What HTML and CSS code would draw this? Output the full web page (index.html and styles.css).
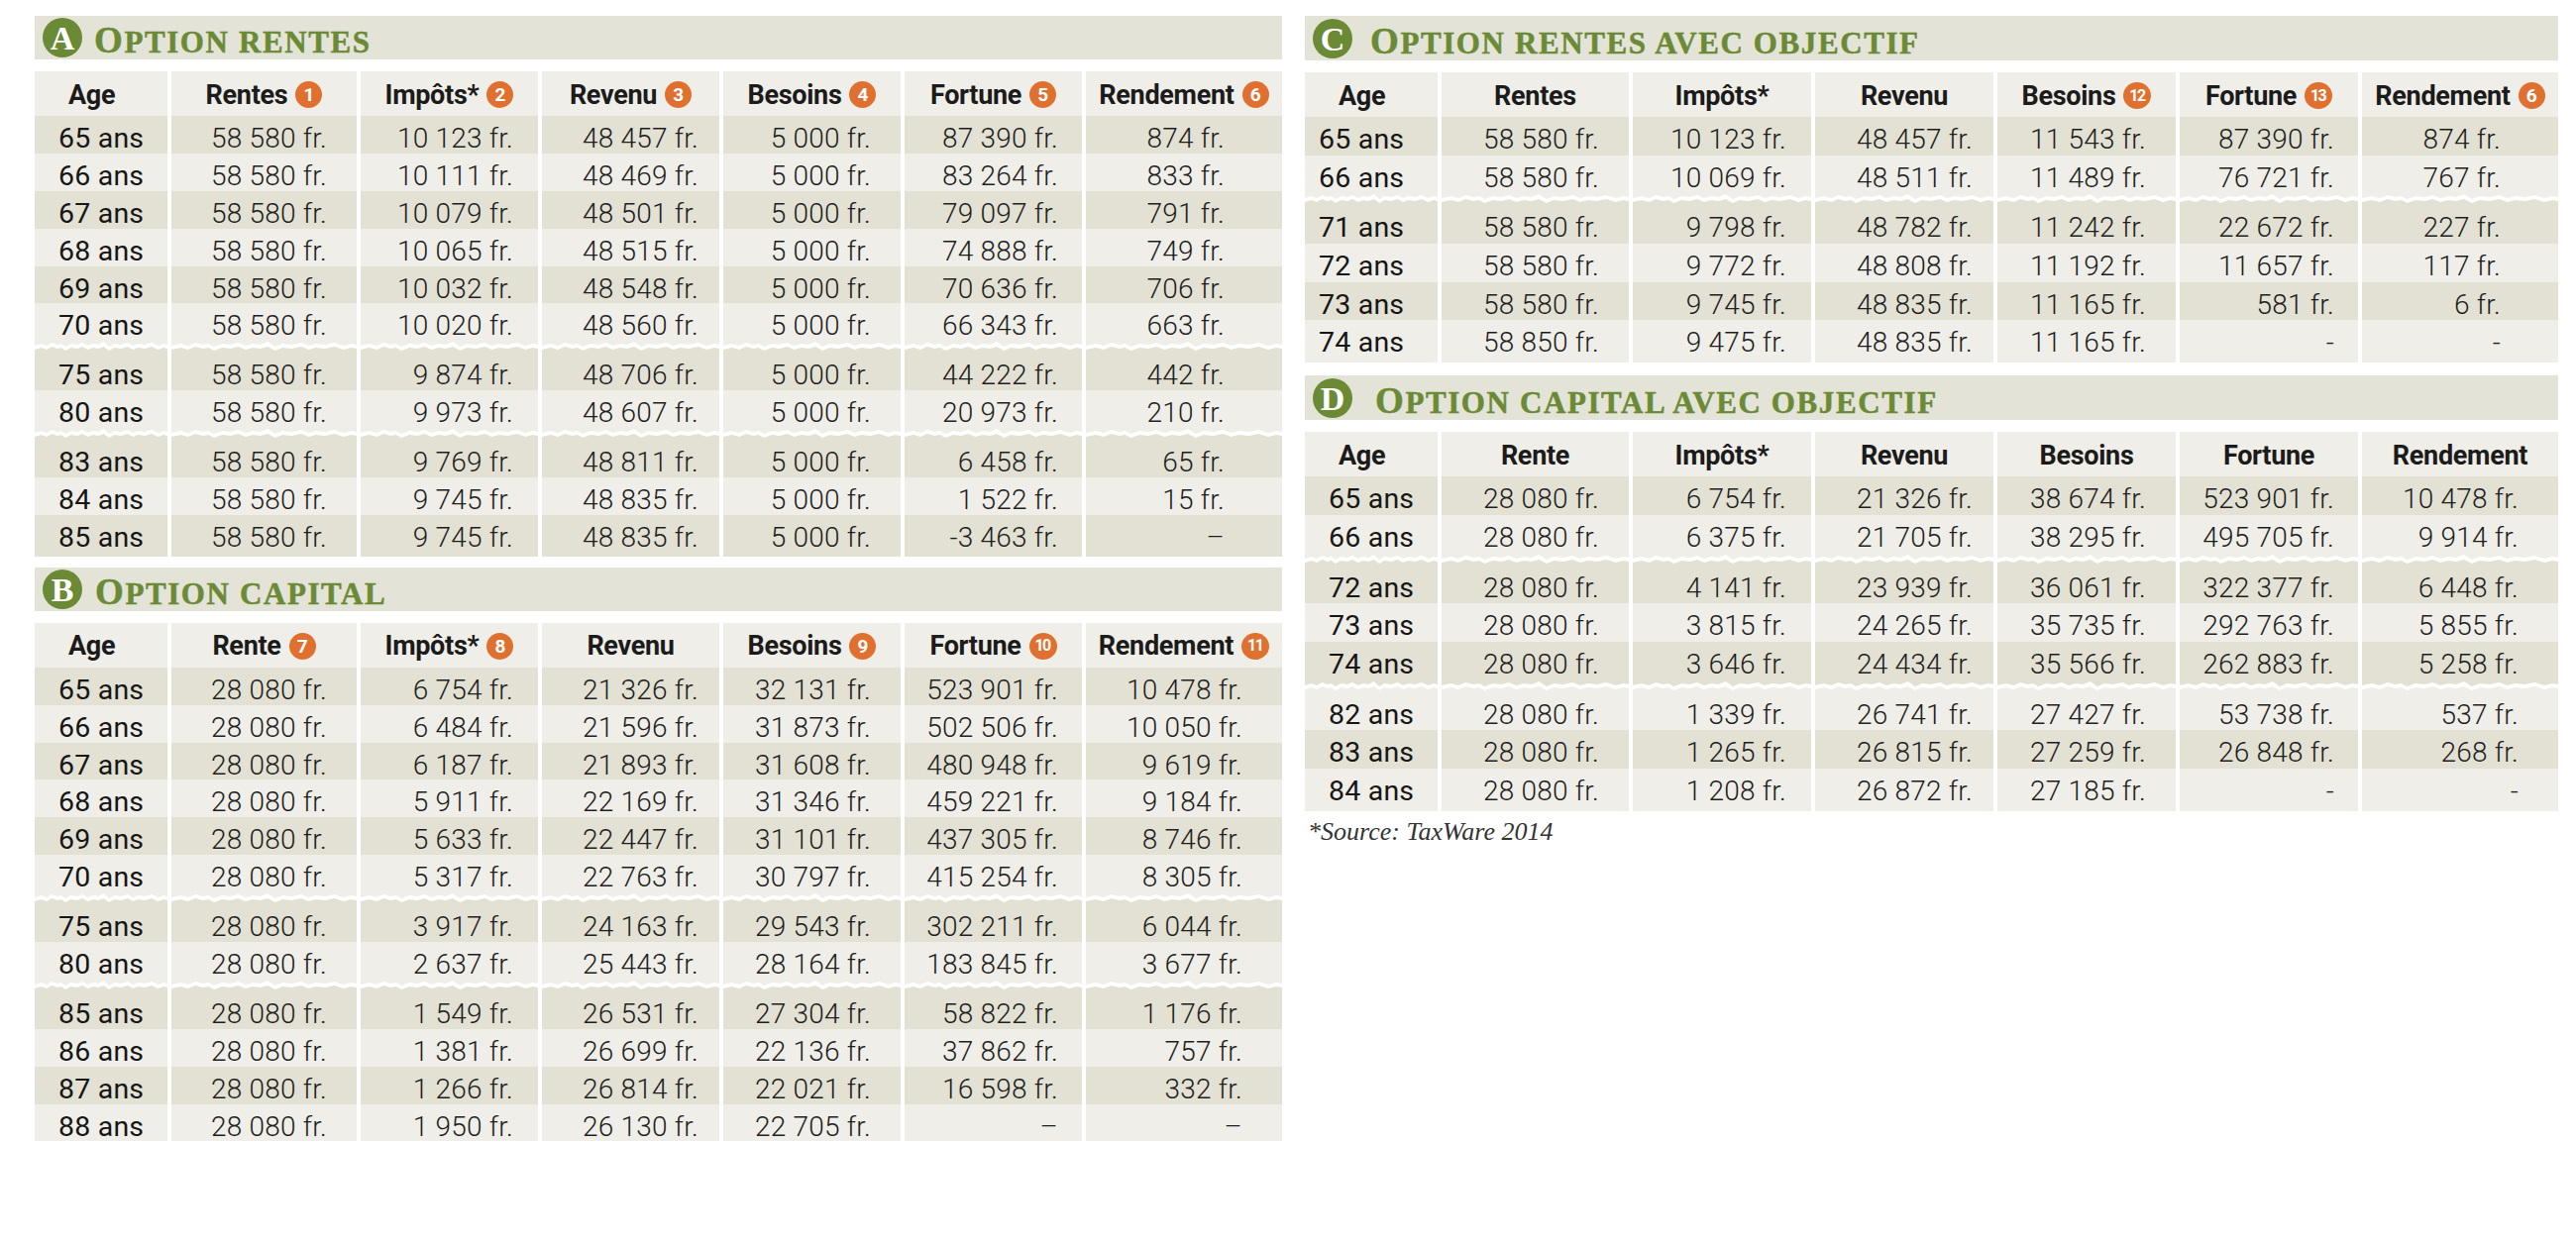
FILE: index.html
```html
<!DOCTYPE html>
<html lang="fr">
<head>
<meta charset="utf-8">
<title>Options rentes et capital</title>
<link rel="stylesheet" href="styles.css">
</head>
<body>
<div class="sheet">
  <div class="col col-l">
    <section class="sec sec-a">
      <div class="ttl"><span class="letter">A</span><h2><span class="big">O</span>ption rentes</h2></div>
      <div class="tbl pad-a">
        <div class="row hd"><div class="age">Age</div><div>Rentes<i class="n">1</i></div><div>Impôts*<i class="n">2</i></div><div>Revenu<i class="n">3</i></div><div>Besoins<i class="n">4</i></div><div>Fortune<i class="n">5</i></div><div>Rendement<i class="n">6</i></div></div>
        <div class="row d"><div class="age">65 ans</div><div>58 580 fr.</div><div>10 123 fr.</div><div>48 457 fr.</div><div>5 000 fr.</div><div>87 390 fr.</div><div>874 fr.</div></div>
        <div class="row l"><div class="age">66 ans</div><div>58 580 fr.</div><div>10 111 fr.</div><div>48 469 fr.</div><div>5 000 fr.</div><div>83 264 fr.</div><div>833 fr.</div></div>
        <div class="row d"><div class="age">67 ans</div><div>58 580 fr.</div><div>10 079 fr.</div><div>48 501 fr.</div><div>5 000 fr.</div><div>79 097 fr.</div><div>791 fr.</div></div>
        <div class="row l"><div class="age">68 ans</div><div>58 580 fr.</div><div>10 065 fr.</div><div>48 515 fr.</div><div>5 000 fr.</div><div>74 888 fr.</div><div>749 fr.</div></div>
        <div class="row d"><div class="age">69 ans</div><div>58 580 fr.</div><div>10 032 fr.</div><div>48 548 fr.</div><div>5 000 fr.</div><div>70 636 fr.</div><div>706 fr.</div></div>
        <div class="row l"><div class="age">70 ans</div><div>58 580 fr.</div><div>10 020 fr.</div><div>48 560 fr.</div><div>5 000 fr.</div><div>66 343 fr.</div><div>663 fr.</div></div>
        <div class="row brk ld"><div></div><div></div><div></div><div></div><div></div><div></div><div></div></div>
        <div class="row d"><div class="age">75 ans</div><div>58 580 fr.</div><div>9 874 fr.</div><div>48 706 fr.</div><div>5 000 fr.</div><div>44 222 fr.</div><div>442 fr.</div></div>
        <div class="row l"><div class="age">80 ans</div><div>58 580 fr.</div><div>9 973 fr.</div><div>48 607 fr.</div><div>5 000 fr.</div><div>20 973 fr.</div><div>210 fr.</div></div>
        <div class="row brk ld"><div></div><div></div><div></div><div></div><div></div><div></div><div></div></div>
        <div class="row d"><div class="age">83 ans</div><div>58 580 fr.</div><div>9 769 fr.</div><div>48 811 fr.</div><div>5 000 fr.</div><div>6 458 fr.</div><div>65 fr.</div></div>
        <div class="row l"><div class="age">84 ans</div><div>58 580 fr.</div><div>9 745 fr.</div><div>48 835 fr.</div><div>5 000 fr.</div><div>1 522 fr.</div><div>15 fr.</div></div>
        <div class="row d"><div class="age">85 ans</div><div>58 580 fr.</div><div>9 745 fr.</div><div>48 835 fr.</div><div>5 000 fr.</div><div>-3 463 fr.</div><div>–</div></div>
      </div>
    </section>

    <section class="sec sec-b">
      <div class="ttl"><span class="letter">B</span><h2><span class="big">O</span>ption capital</h2></div>
      <div class="tbl pad-b">
        <div class="row hd"><div class="age">Age</div><div>Rente<i class="n">7</i></div><div>Impôts*<i class="n">8</i></div><div>Revenu</div><div>Besoins<i class="n">9</i></div><div>Fortune<i class="n nn">10</i></div><div>Rendement<i class="n nn">11</i></div></div>
        <div class="row d"><div class="age">65 ans</div><div>28 080 fr.</div><div>6 754 fr.</div><div>21 326 fr.</div><div>32 131 fr.</div><div>523 901 fr.</div><div>10 478 fr.</div></div>
        <div class="row l"><div class="age">66 ans</div><div>28 080 fr.</div><div>6 484 fr.</div><div>21 596 fr.</div><div>31 873 fr.</div><div>502 506 fr.</div><div>10 050 fr.</div></div>
        <div class="row d"><div class="age">67 ans</div><div>28 080 fr.</div><div>6 187 fr.</div><div>21 893 fr.</div><div>31 608 fr.</div><div>480 948 fr.</div><div>9 619 fr.</div></div>
        <div class="row l"><div class="age">68 ans</div><div>28 080 fr.</div><div>5 911 fr.</div><div>22 169 fr.</div><div>31 346 fr.</div><div>459 221 fr.</div><div>9 184 fr.</div></div>
        <div class="row d"><div class="age">69 ans</div><div>28 080 fr.</div><div>5 633 fr.</div><div>22 447 fr.</div><div>31 101 fr.</div><div>437 305 fr.</div><div>8 746 fr.</div></div>
        <div class="row l"><div class="age">70 ans</div><div>28 080 fr.</div><div>5 317 fr.</div><div>22 763 fr.</div><div>30 797 fr.</div><div>415 254 fr.</div><div>8 305 fr.</div></div>
        <div class="row brk ld"><div></div><div></div><div></div><div></div><div></div><div></div><div></div></div>
        <div class="row d"><div class="age">75 ans</div><div>28 080 fr.</div><div>3 917 fr.</div><div>24 163 fr.</div><div>29 543 fr.</div><div>302 211 fr.</div><div>6 044 fr.</div></div>
        <div class="row l"><div class="age">80 ans</div><div>28 080 fr.</div><div>2 637 fr.</div><div>25 443 fr.</div><div>28 164 fr.</div><div>183 845 fr.</div><div>3 677 fr.</div></div>
        <div class="row brk ld"><div></div><div></div><div></div><div></div><div></div><div></div><div></div></div>
        <div class="row d"><div class="age">85 ans</div><div>28 080 fr.</div><div>1 549 fr.</div><div>26 531 fr.</div><div>27 304 fr.</div><div>58 822 fr.</div><div>1 176 fr.</div></div>
        <div class="row l"><div class="age">86 ans</div><div>28 080 fr.</div><div>1 381 fr.</div><div>26 699 fr.</div><div>22 136 fr.</div><div>37 862 fr.</div><div>757 fr.</div></div>
        <div class="row d"><div class="age">87 ans</div><div>28 080 fr.</div><div>1 266 fr.</div><div>26 814 fr.</div><div>22 021 fr.</div><div>16 598 fr.</div><div>332 fr.</div></div>
        <div class="row l"><div class="age">88 ans</div><div>28 080 fr.</div><div>1 950 fr.</div><div>26 130 fr.</div><div>22 705 fr.</div><div>–</div><div>–</div></div>
      </div>
    </section>
  </div>

  <div class="col col-r">
    <section class="sec sec-c">
      <div class="ttl"><span class="letter">C</span><h2><span class="big">O</span>ption rentes avec objectif</h2></div>
      <div class="tbl pad-c">
        <div class="row hd"><div class="age">Age</div><div>Rentes</div><div>Impôts*</div><div>Revenu</div><div>Besoins<i class="n nn">12</i></div><div>Fortune<i class="n nn">13</i></div><div>Rendement<i class="n">6</i></div></div>
        <div class="row d"><div class="age">65 ans</div><div>58 580 fr.</div><div>10 123 fr.</div><div>48 457 fr.</div><div>11 543 fr.</div><div>87 390 fr.</div><div>874 fr.</div></div>
        <div class="row l"><div class="age">66 ans</div><div>58 580 fr.</div><div>10 069 fr.</div><div>48 511 fr.</div><div>11 489 fr.</div><div>76 721 fr.</div><div>767 fr.</div></div>
        <div class="row brk ld"><div></div><div></div><div></div><div></div><div></div><div></div><div></div></div>
        <div class="row d"><div class="age">71 ans</div><div>58 580 fr.</div><div>9 798 fr.</div><div>48 782 fr.</div><div>11 242 fr.</div><div>22 672 fr.</div><div>227 fr.</div></div>
        <div class="row l"><div class="age">72 ans</div><div>58 580 fr.</div><div>9 772 fr.</div><div>48 808 fr.</div><div>11 192 fr.</div><div>11 657 fr.</div><div>117 fr.</div></div>
        <div class="row d"><div class="age">73 ans</div><div>58 580 fr.</div><div>9 745 fr.</div><div>48 835 fr.</div><div>11 165 fr.</div><div>581 fr.</div><div>6 fr.</div></div>
        <div class="row l"><div class="age">74 ans</div><div>58 850 fr.</div><div>9 475 fr.</div><div>48 835 fr.</div><div>11 165 fr.</div><div>-</div><div>-</div></div>
      </div>
    </section>

    <section class="sec sec-d">
      <div class="ttl"><span class="letter">D</span><h2><span class="big">O</span>ption capital avec objectif</h2></div>
      <div class="tbl pad-d">
        <div class="row hd"><div class="age">Age</div><div>Rente</div><div>Impôts*</div><div>Revenu</div><div>Besoins</div><div>Fortune</div><div>Rendement</div></div>
        <div class="row d"><div class="age">65 ans</div><div>28 080 fr.</div><div>6 754 fr.</div><div>21 326 fr.</div><div>38 674 fr.</div><div>523 901 fr.</div><div>10 478 fr.</div></div>
        <div class="row l"><div class="age">66 ans</div><div>28 080 fr.</div><div>6 375 fr.</div><div>21 705 fr.</div><div>38 295 fr.</div><div>495 705 fr.</div><div>9 914 fr.</div></div>
        <div class="row brk ld"><div></div><div></div><div></div><div></div><div></div><div></div><div></div></div>
        <div class="row d"><div class="age">72 ans</div><div>28 080 fr.</div><div>4 141 fr.</div><div>23 939 fr.</div><div>36 061 fr.</div><div>322 377 fr.</div><div>6 448 fr.</div></div>
        <div class="row l"><div class="age">73 ans</div><div>28 080 fr.</div><div>3 815 fr.</div><div>24 265 fr.</div><div>35 735 fr.</div><div>292 763 fr.</div><div>5 855 fr.</div></div>
        <div class="row d"><div class="age">74 ans</div><div>28 080 fr.</div><div>3 646 fr.</div><div>24 434 fr.</div><div>35 566 fr.</div><div>262 883 fr.</div><div>5 258 fr.</div></div>
        <div class="row brk dl"><div></div><div></div><div></div><div></div><div></div><div></div><div></div></div>
        <div class="row l"><div class="age">82 ans</div><div>28 080 fr.</div><div>1 339 fr.</div><div>26 741 fr.</div><div>27 427 fr.</div><div>53 738 fr.</div><div>537 fr.</div></div>
        <div class="row d"><div class="age">83 ans</div><div>28 080 fr.</div><div>1 265 fr.</div><div>26 815 fr.</div><div>27 259 fr.</div><div>26 848 fr.</div><div>268 fr.</div></div>
        <div class="row l"><div class="age">84 ans</div><div>28 080 fr.</div><div>1 208 fr.</div><div>26 872 fr.</div><div>27 185 fr.</div><div>-</div><div>-</div></div>
      </div>
      <p class="source">*Source: TaxWare 2014</p>
    </section>
  </div>
</div>
</body>
</html>
```

FILE: styles.css
```css
html, body {
  margin: 0;
  padding: 0;
  background: #ffffff;
}

body {
  font-family: Roboto, "Liberation Sans", sans-serif;
  color: #222222;
}

.sheet {
  display: flex;
  align-items: flex-start;
  gap: 23px;
  padding: 16px 0 0 35px;
}

.col {
  display: flex;
  flex-direction: column;
}

.col-l {
  width: 1259px;
  gap: 15px;
  --cols: 134px 187px 179px 179px 179px 179px 1fr;
  --rh: 37.9px;
  --th: 44px;
}

.col-r {
  width: 1265px;
  gap: 17px;
  --cols: 134px 189px 180px 180px 180px 180px 1fr;
  --rh: 38.7px;
  --th: 45px;
}

.sec {
  display: flex;
  flex-direction: column;
}

/* ---------- section title bar ---------- */
.ttl {
  height: var(--th);
  background: #e4e3d7;
  display: flex;
  align-items: center;
  padding-left: 8px;
  margin-bottom: 12px;
  gap: 12px;
}

.sec-b .ttl { gap: 13px; }
.sec-c .ttl { gap: 18px; }
.sec-d .ttl { gap: 23px; }

.letter {
  width: 40px;
  height: 40px;
  border-radius: 50%;
  background: #6b8a36;
  color: #ffffff;
  display: flex;
  align-items: center;
  justify-content: center;
  font-family: "Liberation Serif", "DejaVu Serif", serif;
  font-weight: 700;
  font-size: 34px;
  line-height: 1;
  padding-top: 2px;
  box-sizing: border-box;
}

.ttl h2 {
  margin: 0;
  font-family: "Liberation Serif", "DejaVu Serif", serif;
  font-weight: 700;
  font-size: 31px;
  text-transform: uppercase;
  letter-spacing: 1.6px;
  color: #6b8a35;
  -webkit-text-stroke: 0.5px #6b8a35;
  line-height: 1;
  padding-top: 5px;
}

.ttl h2 .big {
  font-size: 37px;
}

/* ---------- tables ---------- */
.tbl {
  display: flex;
  flex-direction: column;
}

.row {
  display: grid;
  grid-template-columns: var(--cols);
  column-gap: 4px;
  height: var(--rh);
}

.row > div {
  box-sizing: border-box;
  white-space: nowrap;
}

/* header */
.row.hd {
  height: 45px;
}

.row.hd > div {
  background: #efeee8;
  display: flex;
  align-items: center;
  justify-content: center;
  font-family: Roboto, "Liberation Sans", sans-serif;
  font-weight: 700;
  font-size: 27px;
  color: #1b1b1b;
  letter-spacing: -0.3px;
  padding-top: 2px;
}

.row.hd > div.age {
  justify-content: flex-start;
  padding-left: 34px;
}

.n {
  font-style: normal;
  display: inline-flex;
  align-items: center;
  justify-content: center;
  width: 27px;
  height: 27px;
  margin-left: 8px;
  border-radius: 50%;
  background: #e0702f;
  color: #ffffff;
  font-family: Roboto, "Liberation Sans", sans-serif;
  font-weight: 700;
  font-size: 19px;
  letter-spacing: 0;
  line-height: 1;
}

.n.nn {
  font-size: 16px;
  letter-spacing: -1.5px;
  padding-right: 1px;
}

/* data rows */
.row.d > div { background: #e2e1d3; }
.row.l > div { background: #efeee8; }

.row.d > div,
.row.l > div {
  font-family: Roboto, "Liberation Sans", sans-serif;
  font-weight: 300;
  font-size: 28px;
  letter-spacing: 0.2px;
  color: #1e1e1e;
  line-height: var(--rh);
  padding-top: 4px;
  text-align: right;
}

.row.d > div:nth-child(2), .row.l > div:nth-child(2) { padding-right: 30px; }
.row.d > div:nth-child(3), .row.l > div:nth-child(3) { padding-right: 25px; }
.row.d > div:nth-child(4), .row.l > div:nth-child(4) { padding-right: 21px; }
.row.d > div:nth-child(5), .row.l > div:nth-child(5) { padding-right: 30px; }
.row.d > div:nth-child(6), .row.l > div:nth-child(6) { padding-right: 24px; }
.row.d > div:nth-child(7), .row.l > div:nth-child(7) { padding-right: 58px; }

.pad-b .row.d > div:nth-child(7), .pad-b .row.l > div:nth-child(7),
.pad-d .row.d > div:nth-child(7), .pad-d .row.l > div:nth-child(7) {
  padding-right: 40px;
}

.row.d > div.age,
.row.l > div.age {
  text-align: left;
  font-weight: 400;
  font-size: 28.5px;
  letter-spacing: 0.2px;
  color: #161616;
  padding-left: 24px;
  padding-right: 0;
}

.pad-c .row.d > div.age,
.pad-c .row.l > div.age {
  padding-left: 14px;
}

/* torn-paper break between row groups */
.row.brk {
  height: 12px;
}

.row.brk > div {
  background-repeat: no-repeat;
  background-size: 100% 100%;
  background-image:
    url("data:image/svg+xml;utf8,<svg xmlns='http://www.w3.org/2000/svg' viewBox='0 0 200 12' preserveAspectRatio='none'><path fill='white' d='M0 5 L10 3 L18 5 L26 2 L34 4 L40 3 L46 6 L55 3 L64 4 L72 2 L80 5 L88 3 L96 4 L104 1 L112 6 L120 3 L130 4 L140 2 L148 5 L156 3 L166 4 L176 2 L186 5 L194 3 L200 4 L200 8 L194 7 L186 9 L176 6 L166 8 L156 7 L148 9 L140 6 L130 8 L120 7 L112 10 L104 6 L96 8 L88 7 L80 9 L72 6 L64 8 L55 7 L46 10 L40 7 L34 8 L26 6 L18 9 L10 7 L0 9 Z'/></svg>"),
    linear-gradient(to bottom, var(--top) 0, var(--top) 50%, var(--bot) 50%, var(--bot) 100%);
}

.row.brk.ld { --top: #efeee8; --bot: #e2e1d3; }
.row.brk.dl { --top: #e2e1d3; --bot: #efeee8; }

/* source note */
.source {
  margin: 9px 0 0 3px;
  font-family: "Liberation Serif", "DejaVu Serif", serif;
  font-style: italic;
  font-size: 26px;
  color: #333333;
  line-height: 1.2;
}
```
